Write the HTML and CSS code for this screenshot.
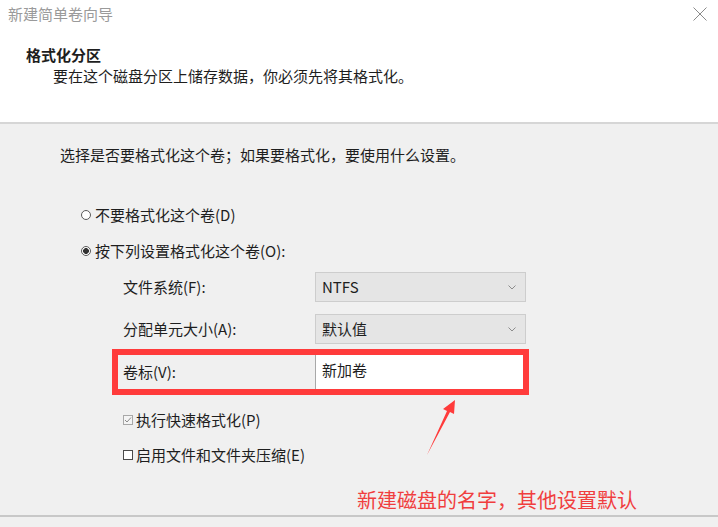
FILE: index.html
```html
<html>
    <head>
        <meta charset="utf-8">
        <title>新建简单卷向导</title>
        <link rel="stylesheet" href="styles.css">
    </head>
    <body>
        <div class="header">
            <div class="titlebar">
                <span class="title">新建简单卷向导</span>
                <svg class="close" width="16" height="14" viewBox="0 0 16 14">
                    <path d="M1.5 0.5 L14.5 13.5 M14.5 0.5 L1.5 13.5"/>
                </svg>
            </div>
            <h1>格式化分区</h1>
            <p class="subtitle">要在这个磁盘分区上储存数据，你必须先将其格式化。</p>
        </div>
        <div class="content">
            <p class="intro">选择是否要格式化这个卷；如果要格式化，要使用什么设置。</p>
            <div class="options">
                <label class="radio"><span class="dot"></span>不要格式化这个卷(D)</label>
                <label class="radio checked"><span class="dot"></span>按下列设置格式化这个卷(O):</label>
            </div>
            <div class="settings">
                <div class="row">
                    <span class="label">文件系统(F):</span>
                    <div class="select">
                        <span class="latin">NTFS</span>
                        <svg class="chevron" width="8" height="5" viewBox="0 0 8 5"><path d="M0.5 0.5 L4 4 L7.5 0.5"/></svg>
                    </div>
                </div>
                <div class="row second">
                    <span class="label">分配单元大小(A):</span>
                    <div class="select">
                        <span>默认值</span>
                        <svg class="chevron" width="8" height="5" viewBox="0 0 8 5"><path d="M0.5 0.5 L4 4 L7.5 0.5"/></svg>
                    </div>
                </div>
                <div class="row marked">
                    <span class="label">卷标(V):</span>
                    <div class="input">新加卷</div>
                </div>
                <label class="check checked">
                    <svg class="box" width="10" height="10" viewBox="0 0 10 10">
                        <rect x="0.5" y="0.5" width="9" height="9"/>
                        <path d="M2 5 L4 7 L8 2.5"/>
                    </svg>
                    执行快速格式化(P)
                </label>
                <label class="check">
                    <svg class="box" width="10" height="10" viewBox="0 0 10 10">
                        <rect x="0.5" y="0.5" width="9" height="9"/>
                    </svg>
                    启用文件和文件夹压缩(E)
                </label>
            </div>
            <p class="note">新建磁盘的名字，其他设置默认</p>
        </div>
        <svg class="arrow" width="45" height="65" viewBox="0 0 45 65">
            <polygon points="35,5 23,14 27,16 7,60 30,17 34,19"/>
        </svg>
    </body>
</html>
```

FILE: styles.css
```css
body
{
    position: relative;
    margin: 0;
    background-color: #F0F0F0;
    color: #1E1E1E;

    font-family: "Noto Sans CJK SC", "Noto Sans", sans-serif;
    font-size: 15px;
    line-height: 20px;
}

p, h1
{
    margin: 0;
}

.header
{
    height: 122px;
    background-color: #FFFFFF;
    border-bottom: 2px solid #D6D6D6;
}

.titlebar
{
    display: flex;
    align-items: center;
    justify-content: space-between;
    height: 28px;
    padding-left: 8px;
    padding-right: 10px;
}

.title
{
    color: #9A9A9A;
}

.close path
{
    fill: none;
    stroke: #8A8A8A;
    stroke-width: 1;
}

h1
{
    margin-top: 17px;
    margin-left: 26px;
    font-size: 15px;
    font-weight: bold;
}

.subtitle
{
    margin-top: 1px;
    margin-left: 53px;
}

.content
{
    padding-top: 21px;
    padding-bottom: 3px;
    border-bottom: 2px solid #C8C8C8;
}

.intro
{
    margin-left: 60px;
}

.options
{
    display: flex;
    flex-direction: column;
    gap: 16px;
    margin-top: 40px;
    padding-left: 81px;
}

.radio
{
    display: flex;
    align-items: center;
    gap: 4px;
}

.dot
{
    box-sizing: border-box;
    width: 10px;
    height: 10px;
    border: 1px solid #5A5A5A;
    border-radius: 50%;
    background-color: #FFFFFF;
}

.radio.checked .dot
{
    background: radial-gradient(circle, #333333 0 2.6px, #FFFFFF 3.2px);
}

.settings
{
    display: flex;
    flex-direction: column;
    margin-top: 11px;
    padding-left: 112px;
}

.row
{
    display: flex;
    align-items: center;
    box-sizing: border-box;
    width: 417px;
    padding-left: 11px;
}

.row.second
{
    margin-top: 12px;
}

.label
{
    width: 192px;
    flex-shrink: 0;
}

.select
{
    display: flex;
    align-items: center;
    justify-content: space-between;
    box-sizing: border-box;
    width: 211px;
    height: 30px;
    padding-left: 6px;
    padding-right: 9px;
    background-color: #E5E5E5;
    border: 1px solid #CDCDCD;
}

.chevron path
{
    fill: none;
    stroke: #8C8C8C;
    stroke-width: 1;
}

.row.marked
{
    margin-top: 5px;
    padding-left: 5px;
    border: 6px solid #FF3B3B;
}

.input
{
    box-sizing: border-box;
    width: 208px;
    height: 34px;
    padding-left: 6px;
    padding-top: 5px;
    background-color: #FFFFFF;
    border-left: 1px solid #A8A8A8;
}

.check
{
    display: flex;
    align-items: center;
    gap: 3px;
    margin-top: 15px;
    padding-left: 11px;
}

.box rect
{
    fill: #FFFFFF;
    stroke: #4A4A4A;
}

.check.checked .box rect
{
    fill: #F4F4F4;
    stroke: #A8A8A8;
}

.box path
{
    fill: none;
    stroke: #8A8A8A;
    stroke-width: 1;
}

.note
{
    margin-top: 23px;
    margin-left: 357px;
    color: #F03E3E;
    font-size: 20px;
    line-height: 24px;
}

.arrow
{
    position: absolute;
    left: 420px;
    top: 395px;
}

.arrow polygon
{
    fill: #FF3B3B;
}
```
